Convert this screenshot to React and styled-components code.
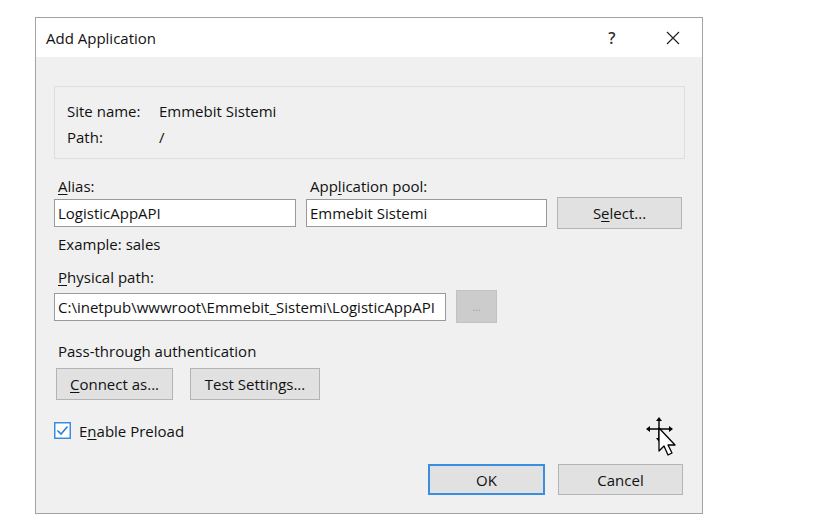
import React from 'react';
import styled, { createGlobalStyle } from 'styled-components';

const GlobalStyle = createGlobalStyle`
  body {
    margin: 0;
    background: #ffffff;
    font-family: "Open Sans", "Noto Sans", sans-serif;
  }
`;

const Page = styled.div`
  position: relative;
  width: 820px;
  height: 525px;
  padding: 17px 0 0 35px;
  box-sizing: border-box;
`;

const Dialog = styled.div`
  width: 668px;
  height: 497px;
  box-sizing: border-box;
  border: 1px solid #a3a3a3;
  background: #f0f0f0;
  display: flex;
  flex-direction: column;
  color: #111;
  font-size: 15px;
`;

const TitleBar = styled.div`
  height: 39px;
  flex: none;
  background: #fff;
  display: flex;
  align-items: center;
  padding-left: 10px;
`;

const Title = styled.div`
  flex: 1;
  font-size: 15px;
`;

const TitleButton = styled.div`
  width: 46px;
  height: 39px;
  display: flex;
  align-items: center;
  justify-content: center;
  margin-left: ${p => p.gap || 0}px;
  margin-right: ${p => p.right || 0}px;
  font-size: 16px;
  font-weight: 600;
  color: #333;
`;

const Body = styled.div`
  flex: 1;
  display: flex;
  flex-direction: column;
  padding: 29px 17px 18px 18px;
`;

const SiteBox = styled.div`
  height: 73px;
  box-sizing: border-box;
  border: 1px solid #dddddd;
  padding: 11px 12px;
  display: grid;
  grid-template-columns: 92px 1fr;
  grid-auto-rows: 26px;
  align-items: center;
`;

const Label = styled.div`
  line-height: 22px;
  height: 22px;
  margin-top: ${p => p.top || 0}px;
  padding-left: ${p => p.indent || 0}px;
`;

const Key = styled.span`
  text-decoration: underline;
  text-underline-offset: 2px;
`;

const FieldGrid = styled.div`
  margin-top: 16px;
  display: grid;
  grid-template-columns: 242px 241px 125px;
  column-gap: 10px;
  grid-template-rows: 22px 32px;
  align-items: center;
`;

const Input = styled.div`
  height: 28px;
  width: ${p => p.width ? `${p.width}px` : 'auto'};
  box-sizing: border-box;
  border: 1px solid #9a9a9a;
  background: #fff;
  padding-left: 3px;
  display: flex;
  align-items: center;
  white-space: nowrap;
  overflow: hidden;
`;

const Button = styled.div`
  width: ${p => p.width}px;
  height: ${p => p.height || 32}px;
  box-sizing: border-box;
  border: ${p => (p.primary ? '2px solid #3a8ee0' : '1px solid #b4b4b4')};
  background: #e1e1e1;
  display: flex;
  align-items: center;
  justify-content: center;
  color: #111;
`;

const DisabledButton = styled(Button)`
  background: #cccccc;
  border-color: #c2c2c2;
  color: #a0a0a0;
  font-size: 11px;
`;

const Row = styled.div`
  display: flex;
  align-items: center;
  gap: ${p => p.gap || 10}px;
  margin-top: ${p => p.top || 0}px;
  padding-left: ${p => p.indent || 0}px;
`;

const CheckRow = styled.div`
  display: flex;
  align-items: center;
  gap: 8px;
  margin-top: 22px;
  height: 17px;
`;

const Footer = styled.div`
  margin-top: auto;
  display: flex;
  justify-content: flex-end;
  gap: 13px;
  padding-right: 2px;
`;

const Cursor = styled.svg`
  position: absolute;
  left: 645px;
  top: 415px;
`;

const CheckBox = () => (
  <svg width="17" height="17" viewBox="0 0 17 17">
    <rect x="0.75" y="0.75" width="15.5" height="15.5" fill="#fff" stroke="#3a8ee0" strokeWidth="1.5" />
    <path d="M3.5 8.5 L7 12 L13.5 4.5" fill="none" stroke="#2f7fd0" strokeWidth="1.6" />
  </svg>
);

const CloseIcon = () => (
  <svg width="14" height="14" viewBox="0 0 14 14">
    <path d="M1 1 L13 13 M13 1 L1 13" stroke="#222" strokeWidth="1.2" />
  </svg>
);

const MoveCursor = () => (
  <Cursor width="34" height="46" viewBox="0 0 34 46">
    <path d="M14 5 V24 M4 14 H25" stroke="#000" strokeWidth="1.4" />
    <path d="M14 2 L11 6 H17 Z M1 14 L5 11 V17 Z M28 14 L24 11 V17 Z M14 27 L11 23 H17 Z" fill="#000" />
    <path
      d="M14 13 L14 36 L19 31 L23 40 L27 38 L23 30 L30 30 Z"
      fill="#fff"
      stroke="#000"
      strokeWidth="1.3"
      strokeLinejoin="round"
    />
  </Cursor>
);

export default function App() {
  return (
    <>
      <GlobalStyle />
      <Page>
        <Dialog>
          <TitleBar>
            <Title>Add Application</Title>
            <TitleButton>?</TitleButton>
            <TitleButton gap={15} right={6}>
              <CloseIcon />
            </TitleButton>
          </TitleBar>
          <Body>
            <SiteBox>
              <span>Site name:</span>
              <span>Emmebit Sistemi</span>
              <span>Path:</span>
              <span>/</span>
            </SiteBox>

            <FieldGrid>
              <Label indent={4}>
                <Key>A</Key>lias:
              </Label>
              <Label indent={4}>
                App<Key>l</Key>ication pool:
              </Label>
              <div />
              <Input>LogisticAppAPI</Input>
              <Input>Emmebit Sistemi</Input>
              <Button width={125}>
                S<Key>e</Key>lect...
              </Button>
            </FieldGrid>

            <Label top={4} indent={4}>Example: sales</Label>

            <Label top={11} indent={4}>
              <Key>P</Key>hysical path:
            </Label>
            <Row top={2}>
              <Input width={392}>C:\inetpub\wwwroot\Emmebit_Sistemi\LogisticAppAPI</Input>
              <DisabledButton width={41} height={33}>...</DisabledButton>
            </Row>

            <Label top={17} indent={4}>Pass-through authentication</Label>
            <Row top={6} gap={17} indent={2}>
              <Button width={117}>
                <Key>C</Key>onnect as...
              </Button>
              <Button width={130}>Test Settings...</Button>
            </Row>

            <CheckRow>
              <CheckBox />
              <span>
                E<Key>n</Key>able Preload
              </span>
            </CheckRow>

            <Footer>
              <Button primary width={117} height={31}>OK</Button>
              <Button width={125} height={31}>Cancel</Button>
            </Footer>
          </Body>
        </Dialog>
        <MoveCursor />
      </Page>
    </>
  );
}
